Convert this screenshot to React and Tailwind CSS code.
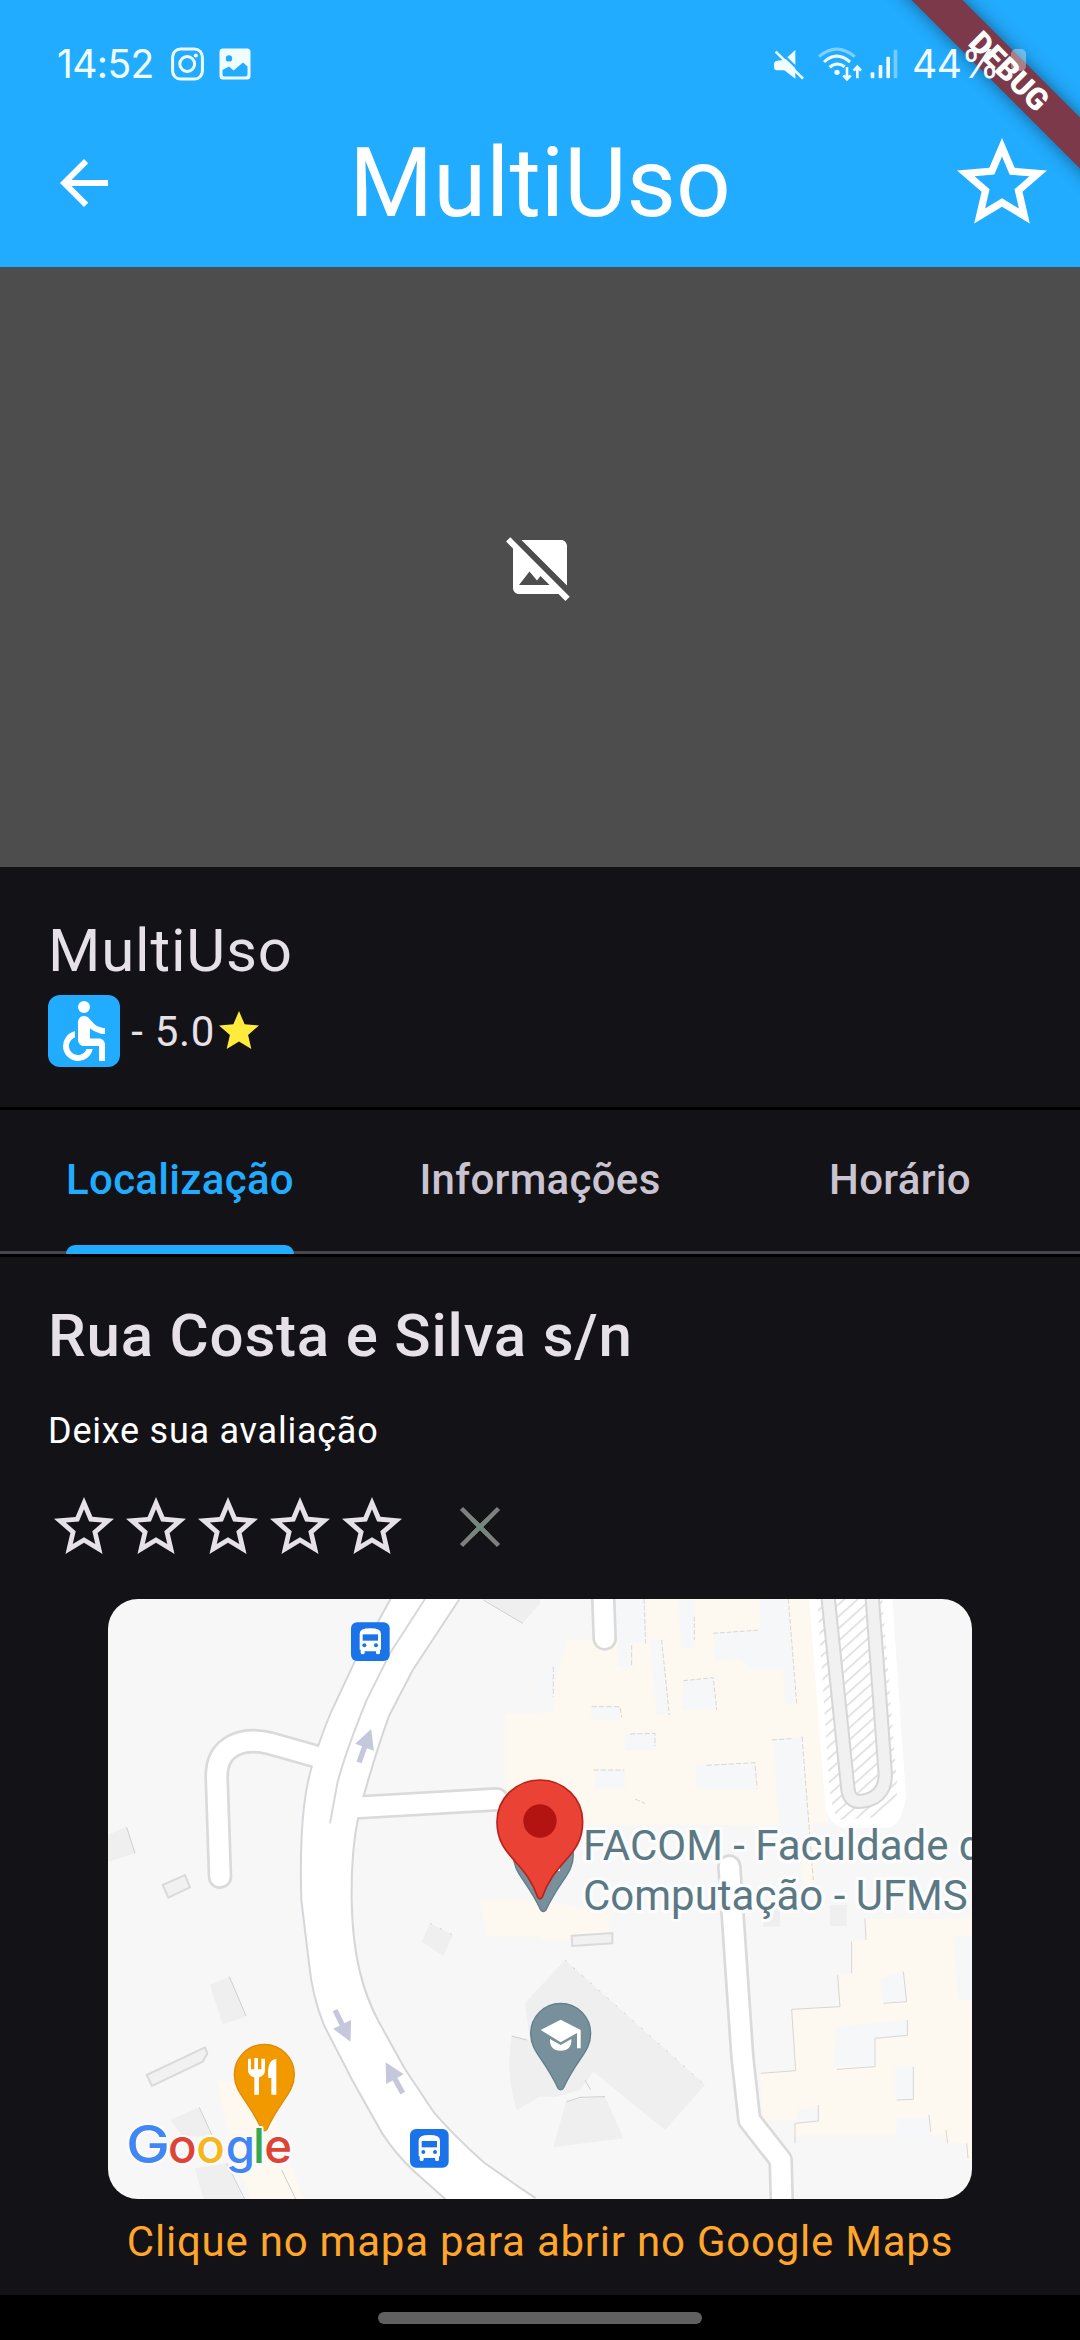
import { MdAccessible, MdArrowBack, MdImageNotSupported, MdStar, MdStarBorder } from "react-icons/md";

function InstagramIcon() {
  return (
    <svg className="h-[34px] w-[33px]" viewBox="0 0 33 34" fill="none" stroke="currentColor">
      <rect x="1.6" y="1.9" width="29.8" height="30.2" rx="8" strokeWidth="3" />
      <circle cx="16.2" cy="17" r="7.4" strokeWidth="3" />
      <circle cx="24.8" cy="8.4" r="2" fill="currentColor" stroke="none" />
    </svg>
  );
}

function GalleryIcon() {
  return (
    <svg className="h-8 w-8" viewBox="0 0 32 32">
      <path
        fill="currentColor"
        fillRule="evenodd"
        d="M4 .5h24a3.500 3.500 0 0 1 3.500 3.500v24a3.500 3.500 0 0 1-3.500 3.500H4A3.500 3.500 0 0 1 .5 28V4A3.500 3.500 0 0 1 4 .5ZM10 7.200a3.200 3.200 0 1 0 0 6.400 3.200 3.200 0 0 0 0-6.400ZM3.500 22v4.500a2 2 0 0 0 2 2h21a2 2 0 0 0 2-2V18.500L24 14.500l-9.500 8L10 18.500Z"
      />
    </svg>
  );
}

function MuteIcon() {
  return (
    <svg className="h-8 w-8" viewBox="0 0 96 96">
      <path fill="currentColor" d="M12 38Q3 40 3 50V58Q3 67 12 67H34L67 92V6L34 36Z" />
      <path stroke="#22acff" strokeWidth="7" d="M14 4 98 86" />
      <path stroke="currentColor" strokeWidth="8" d="M8 11 90 92" />
    </svg>
  );
}

function WifiIcon() {
  return (
    <svg className="h-[34px] w-[44px]" viewBox="0 0 132 102" fill="none" stroke="currentColor" strokeWidth="9">
      <path d="M3 29Q56 -16 110 29" opacity=".45" />
      <path d="M18 45Q56 10 96 45" />
      <path d="M35 61Q56 42 80 59" />
      <circle cx="57" cy="76" r="8" fill="currentColor" stroke="none" />
      <path d="M87 60V96M76 85 87 97 98 85M118 94V60M107 71 118 59 129 71" strokeWidth="8" />
    </svg>
  );
}

function SignalIcon() {
  return (
    <svg className="h-[30px] w-[28px]" viewBox="0 0 84 90" fill="currentColor">
      <rect x="2" y="70" width="11" height="18" rx="3" />
      <rect x="26" y="48" width="11" height="40" rx="3" />
      <rect x="49" y="23" width="11" height="65" rx="3" />
      <rect x="71" y="2" width="11" height="86" rx="3" opacity=".4" />
    </svg>
  );
}

function StatusBar() {
  return (
    <div className="relative z-20 flex h-32 items-center pr-[54px] pl-[57px] font-[Inter] text-[39px] tracking-[-0.6px] text-[#f0fcff]">
      <span>14:52</span>
      <div className="ml-[17px] flex items-center gap-[15px]">
        <InstagramIcon />
        <GalleryIcon />
      </div>
      <div className="ml-auto flex items-center">
        <MuteIcon />
        <span className="ml-[13px] flex"><WifiIcon /></span>
        <span className="ml-2 flex"><SignalIcon /></span>
        <span className="ml-[14px]">44%</span>
        <span className="mb-2 ml-3 h-[22px] w-[15px] rounded-[5px] bg-white/35" />
      </div>
    </div>
  );
}

function DebugBanner() {
  return (
    <div className="absolute top-0 right-0 z-10 h-[267px] w-[267px] overflow-hidden">
      <div className="absolute top-[53px] right-[-78px] flex h-9 w-[300px] rotate-45 items-center justify-center bg-[#7c394a] pl-0.5 text-[30.6px] font-black text-white shadow-[0_0_18px_rgba(0,0,0,0.45)]">
        DEBUG
      </div>
    </div>
  );
}

function Header() {
  return (
    <header className="relative h-[267px] bg-[#22acff] text-white">
      <StatusBar />
      <div className="grid h-[110px] grid-cols-[1fr_auto_1fr] items-center pr-6 pl-12">
        <MdArrowBack className="size-[72px]" />
        <h1 className="mr-6 text-[96px] leading-none">MultiUso</h1>
        <MdStarBorder className="size-[108px] justify-self-end" />
      </div>
      <DebugBanner />
    </header>
  );
}

const tabs = ["Localização", "Informações", "Horário"];

function Tabs() {
  return (
    <nav className="grid h-36 grid-cols-3 justify-items-center bg-[linear-gradient(#49454f,#49454f)] bg-[length:100%_3px] bg-bottom bg-no-repeat text-[42px] font-medium tracking-[0.3px]">
      {tabs.map((tab, i) => (
        <div
          key={tab}
          className={i === 0 ? "flex h-36 flex-col text-[#22acff]" : "flex h-36 flex-col text-[#cac4d0]"}
        >
          <span className="flex h-[135px] items-center pt-[3px]">{tab}</span>
          {i === 0 && <span className="h-[9px] rounded-t-[9px] bg-[#22acff]" />}
        </div>
      ))}
    </nav>
  );
}

/* Place marker whose head is centred on the origin. */
function PlacePin({ x, y, fill, edge, children }) {
  return (
    <g transform={`translate(${x} ${y})`}>
      <path
        d="M0 -90A90 90 0 0 1 90 0C90 56 50 74 8 165Q0 174 -8 165C-50 74 -90 56 -90 0A90 90 0 0 1 0 -90Z"
        fill={fill}
        stroke={edge}
        strokeWidth="4"
      />
      {children}
    </g>
  );
}

function BusStop({ x, y }) {
  return (
    <g transform={`translate(${x} ${y})`}>
      <rect width="116" height="116" rx="18" fill="#1a73e8" />
      <path d="M26 34Q26 18 58 18Q90 18 90 34V82H87V92Q87 96 81 96Q75 96 75 92V87H41V92Q41 96 35 96Q29 96 29 92V82H26Z" fill="#fff" />
      <rect x="35" y="36" width="46" height="19" fill="#1a73e8" />
      <circle cx="40" cy="69" r="6" fill="#1a73e8" />
      <circle cx="75" cy="69" r="6" fill="#1a73e8" />
    </g>
  );
}

function Arrow({ x, y, angle }) {
  return (
    <path
      transform={`translate(${x} ${y}) rotate(${angle})`}
      d="M0 -54 30 4H8V52H-8V4H-30Z"
      fill="#c5c8dc"
    />
  );
}

const roadEast = "M1075 27 935 240 865 375Q830 470 790 610L770 690Q750 790 752 930C755 1110 790 1210 830 1290L910 1435 1000 1570Q1060 1640 1150 1720L1260 1797 1305 1827";
const roadWest = "M1040 1827 940 1738Q890 1690 850 1630L760 1470 675 1305Q640 1220 630 1120L607 930Q602 760 615 650C625 560 650 480 695 370L765 220 835 100 875 27";
const roadFill = "M1075 27 935 240 865 375Q830 470 790 610L770 690Q750 790 752 930C755 1110 790 1210 830 1290L910 1435 1000 1570Q1060 1640 1150 1720L1260 1797 1305 1827H1040L940 1738Q890 1690 850 1630L760 1470 675 1305Q640 1220 630 1120L607 930Q602 760 615 650C625 560 650 480 695 370L765 220 835 100 875 27Z";
const sideRoads = [
  "M680 508 510 460C430 440 350 465 350 560L360 860",
  "M740 654 1190 628",
  "M1888 830 1927 1400 1948 1590 2042 1710 2046 1860",
  "M1508 -20 1514 145",
];

function MapPreview() {
  return (
    <svg className="h-[600px] w-[864px] rounded-[30px] bg-[#f7f7f7]" viewBox="24 27 2592 1800">
      <defs>
        <pattern id="hatch" width="27" height="27" patternUnits="userSpaceOnUse" patternTransform="rotate(-42)">
          <rect width="27" height="5" fill="#dedede" />
        </pattern>
      </defs>

      {/* Campus grounds */}
      <g fill="#fdf8f0">
        <path d="M1640 27H2125L2185 700H2140L2150 900H2110L2090 705H1215V370H1320L1360 300 1400 150H1640Z" />
        <path d="M1140 930H1320L1530 970 1525 1050H1330L1320 1040H1160Z" />
        <path d="M2295 985 2616 985V1712L2600 1712 2596 1660H2545L2530 1635H2085V1590H1990L1982 1450 2085 1442 2075 1258 2220 1250 2215 1155 2255 1150V1055L2298 1050Z" />
        <path d="M350 1470 500 1490 530 1600 610 1827H456L400 1700Z" />
      </g>
      <g fill="#f5f7f9">
        <path d="M1545 27H1632L1636 160H1590L1598 230H1555Z" />
        <path d="M1735 30H1783V175H1745Z" />
        <path d="M1840 130 1980 120V27H2065L2088 340H2055L2050 240H1960L1920 210 1845 212Z" />
        <path d="M1650 150H1685L1708 375H1670Z" />
        <path d="M1750 272 1840 263 1850 360H1745Z" />
        <rect x="1475" y="348" width="84" height="40" />
        <rect x="1575" y="430" width="92" height="52" />
        <rect x="1485" y="538" width="88" height="58" />
        <rect x="1790" y="522" width="176" height="78" />
        <path d="M2020 446 2106 440 2130 760H2040Z" />
        <path d="M1320 230H1360V365H1320Z" />
        <path d="M2340 1165 2410 1145 2420 1235 2350 1238Z" />
        <path d="M2210 1310 2425 1290V1340L2325 1345V1430H2200Z" />
        <path d="M2385 1430H2440V1528H2385Z" />
        <path d="M2390 1585H2488V1640H2390Z" />
        <path d="M2095 1560 2155 1555V1595L2085 1600Z" />
        <path d="M2560 1040H2616V1230H2575Z" />
      </g>
      <g fill="none" stroke="#d9d6d2" strokeWidth="3">
        <path d="M1632 27 1637 165M1783 80V150M2065 27 2090 340M1840 130 1980 120M1685 150 1708 375M1750 272 1840 263 1850 360" strokeDasharray="14 6" />
        <path d="M1475 350H1560L1565 382M1590 432 1665 430V468M1480 540H1573M1820 526 1964 518 1972 596M2015 450 2074 446M2106 440 2140 870M1595 165V225M1360 230V320M1605 627 1635 640" strokeDasharray="16 6" />
        <path d="M2295 985 2298 1050M2255 1055V1150M2213 1155 2220 1250 2075 1258 2087 1442 1982 1450M2410 1145 2420 1235 2350 1240M2422 1290V1336L2325 1345V1430L2210 1438M2440 1430V1528L2390 1530M2155 1545V1593L2085 1600V1660M2487 1575 2492 1625M2538 1620 2543 1660M2600 1660 2604 1705" />
      </g>

      {/* Buildings */}
      <g fill="#efefef">
        <path d="M1150 27 1268 100 1320 40V27Z" />
        <path d="M24 735 80 710 105 790 24 815Z" />
        <path d="M1990 950H2040V1010H1990Z M2190 945H2240V1008H2190Z" />
        <path d="M990 1000 1058 1035 1030 1098 965 1055Z" />
        <path d="M330 1185 390 1160 438 1280 368 1302Z" />
        <path d="M210 1590 298 1552 335 1640 250 1640Z M285 1735 380 1720 430 1827H310Z" />
        <path d="M1395 1110 1815 1485 1695 1620 1480 1445 1440 1500 1370 1520 1320 1520 1250 1560Q1215 1450 1235 1338L1290 1350 1275 1240 1330 1180Z" />
        <path d="M1400 1530 1515 1520 1570 1645 1360 1672Z" />
      </g>
      <g fill="none" stroke="#cfcfcf" strokeWidth="3">
        <path d="M1150 30 1268 100M80 712 105 790M388 1160 438 1278M298 1552 338 1640M380 1720 434 1827M545 1740 587 1827M1235 1338 1280 1350M1455 1470 1472 1500M1400 1535 1440 1522 1515 1520" />
        <path d="M990 1000 1058 1035M1395 1110 1815 1485" strokeDasharray="6 28" />
      </g>
      <g fill="#f1f1f1" stroke="#dadada" strokeWidth="6">
        <path d="M188 885 255 855 270 892 205 923Z" />
        <path d="M140 1455 315 1372 322 1390 308 1415 156 1488Z" />
        <path d="M1415 1037 1537 1029V1060L1417 1068Z" />
      </g>

      {/* Parking loop */}
      <path d="M2125 0H2375L2418 620Q2405 700 2370 712L2230 715Q2180 700 2175 640Z" fill="#fff" />
      <path d="M2150 0H2345L2392 590Q2395 650 2340 680L2215 690Q2190 650 2186 560Z" fill="url(#hatch)" />
      <g fill="none" strokeLinejoin="round">
        <path d="M2182 0 2244 600Q2250 640 2290 633C2340 625 2360 590 2355 540L2315 0" stroke="#d6d6d6" strokeWidth="46" />
        <path d="M2182 0 2244 600Q2250 640 2290 633C2340 625 2360 590 2355 540L2315 0" stroke="#f1f1f1" strokeWidth="34" />
      </g>

      {/* Roads */}
      <g fill="none" stroke="#dadada" strokeWidth="74" strokeLinecap="round" strokeLinejoin="round">
        {sideRoads.map((d) => <path key={d} d={d} />)}
      </g>
      <path d={roadEast} fill="none" stroke="#d6d6da" strokeWidth="12" />
      <path d={roadWest} fill="none" stroke="#d6d6da" strokeWidth="12" />
      <path d={roadFill} fill="#fff" />
      <g fill="none" stroke="#fff" strokeWidth="58" strokeLinecap="round" strokeLinejoin="round">
        {sideRoads.map((d) => <path key={d} d={d} />)}
      </g>
      <path d="M975 27 870 190 800 330Q735 490 712 580L690 700" fill="none" stroke="#d8d8d8" strokeWidth="6" />
      <Arrow x={795} y={468} angle={20} />
      <Arrow x={728} y={1307} angle={154} />
      <Arrow x={883} y={1464} angle={-29} />

      <BusStop x={753} y={97} />
      <BusStop x={930} y={1617} />

      {/* Places */}
      <g fontFamily="Roboto, sans-serif" fontSize="126" fill="#5c7883" stroke="#fbfcfd" strokeWidth="20" strokeLinejoin="round" style={{ paintOrder: "stroke" }}>
        <text x="1449" y="810">FACOM - Faculdade de</text>
        <text x="1449" y="961">Computação - UFMS</text>
      </g>
      <PlacePin x={1330} y={795} fill="#78909c" edge="#607d8b">
        <rect x="40" y="34" width="10" height="14" fill="#fff" />
      </PlacePin>
      <PlacePin x={1382} y={1330} fill="#78909c" edge="#5f7f8c">
        <path d="M-60 -10 0 -41 60 -10V45H49V-1L0 27Z" fill="#fff" />
        <path d="M-32 17 0 35 32 17Q34 52 0 52Q-34 52 -32 17Z" fill="#fff" />
      </PlacePin>
      <PlacePin x={493} y={1453} fill="#f29900" edge="#dd8b08">
        <path d="M-49 -47H-40V-15H-30V-49H-19V-15H-9V-47H2V-10Q0 5 -16 9V61H-30V9Q-47 5 -49 -10Z" fill="#fff" />
        <path d="M36 -47V61H21V11H12C9 -20 14 -44 36 -47Z" fill="#fff" />
      </PlacePin>
      <path d="M1320 570C1392 570 1448 626 1448 695C1448 800 1365 810 1327 921Q1320 932 1313 921C1275 810 1191 800 1191 695C1191 626 1248 570 1320 570Z" fill="#ea4335" stroke="#b8221a" strokeWidth="5" />
      <circle cx="1320" cy="693" r="50" fill="#b31412" />

      <g fontFamily="Inter, sans-serif" fontWeight="500" fontSize="142" stroke="#fbfbfb" strokeWidth="12" strokeLinejoin="round" style={{ paintOrder: "stroke" }}>
        <text x="78" y="1719" fontSize="158" textLength="132" lengthAdjust="spacingAndGlyphs" fill="#4285f4">G</text>
        <text y="1719">
          <tspan x="204" fill="#db4437">o</tspan>
          <tspan x="289" fill="#f4b81f">o</tspan>
          <tspan x="377" fill="#4285f4">g</tspan>
          <tspan x="459" fill="#34a853">l</tspan>
          <tspan x="493" fill="#db4437">e</tspan>
        </text>
      </g>
    </svg>
  );
}

export default function App() {
  return (
    <div className="flex h-[2340px] w-[1080px] flex-col overflow-hidden bg-[#131217] font-[Roboto,sans-serif] text-[#e6e0e9]">
      <Header />

      <div className="flex h-[600px] items-center justify-center bg-[#4d4d4d] text-white">
        <MdImageNotSupported className="size-[72px]" />
      </div>

      <section className="h-60 px-12 pt-12">
        <h2 className="text-[60px] leading-[72px] tracking-[0.8px]">MultiUso</h2>
        <div className="mt-2 flex items-center">
          <span className="flex size-[72px] items-center justify-center rounded-xl bg-[#22acff] text-white">
            <MdAccessible className="size-[72px]" />
          </span>
          <span className="text-[42px] tracking-[0.75px] whitespace-pre"> - 5.0</span>
          <MdStar className="size-12 text-[#ffeb3b]" />
        </div>
      </section>

      <div className="h-[3px] bg-black" />
      <Tabs />
      <div className="h-[3px] bg-black" />

      <main className="flex flex-1 flex-col">
        <h3 className="mt-[43px] px-12 text-[60px] leading-[72px] font-medium tracking-[0.8px]">Rua Costa e Silva s/n</h3>
        <p className="mt-[35px] px-12 text-4xl leading-[48px] tracking-[0.76px] text-white">Deixe sua avaliação</p>
        <div className="mt-9 flex items-center px-12">
          {[1, 2, 3, 4, 5].map((n) => (
            <MdStarBorder key={n} className="size-[72px]" />
          ))}
          <svg className="ml-[51px] size-[42px]" viewBox="0 0 42 42" fill="none" stroke="#7e817f" strokeWidth="4.5">
            <path d="M2.500 2.500 39.500 39.500M39.500 2.500 2.500 39.500" />
            <path d="M13 13 29 29M29 13 13 29" stroke="#74877a" />
          </svg>
        </div>
        <div className="mt-9 flex justify-center">
          <MapPreview />
        </div>
        <p className="mt-[19px] text-center text-[42px] leading-[48px] tracking-[0.77px] text-[#ffa62b]">
          Clique no mapa para abrir no Google Maps
        </p>
      </main>

      <footer className="flex h-[45px] justify-center bg-black pt-[17px]">
        <span className="h-3 w-[324px] rounded-full bg-[#606060]" />
      </footer>
    </div>
  );
}
